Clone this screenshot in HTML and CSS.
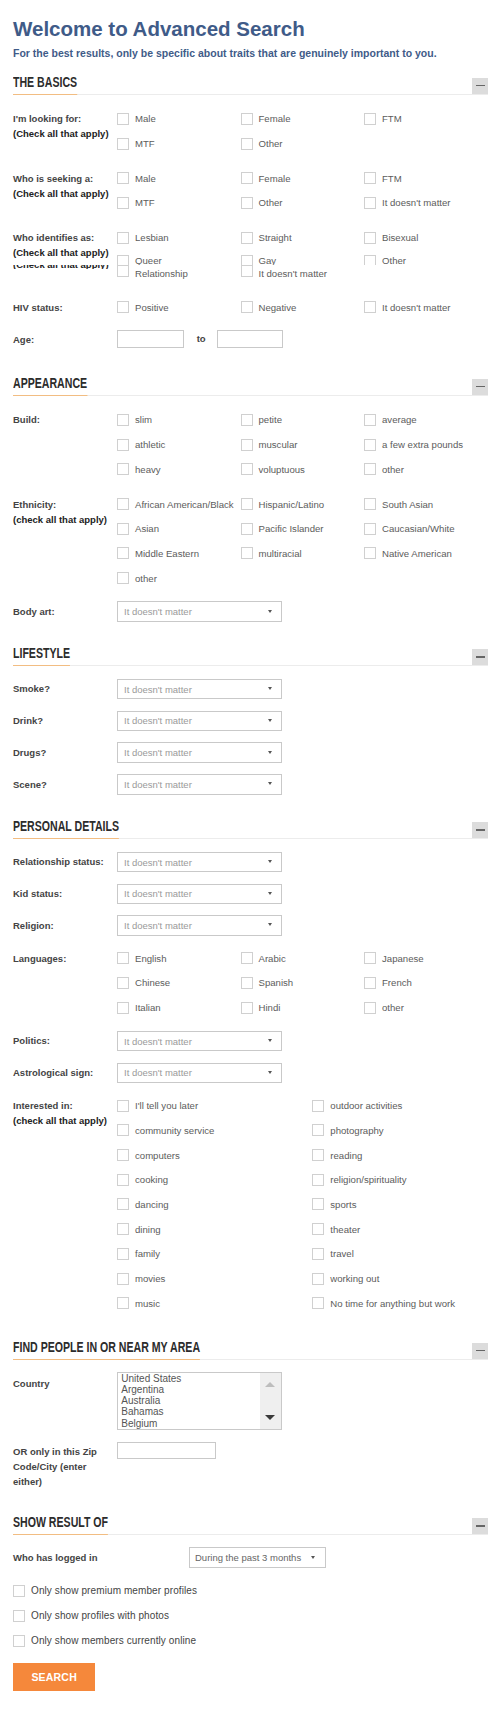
FILE: index.html
```html
<!DOCTYPE html>
<html lang="en">
<head>
<meta charset="utf-8">
<title>Advanced Search</title>
<link rel="stylesheet" href="styles.css">
</head>
<body>
<main class="page">
  <h1 class="title">Welcome to Advanced Search</h1>
  <p class="intro">For the best results, only be specific about traits that are genuinely important to you.</p>

  <section class="section first">
    <div class="section-head"><h2 class="section-title">THE BASICS</h2><button class="collapse" aria-label="Collapse"></button></div>
    <div class="section-body">
      <div class="field">
        <div class="field-label">I'm looking for:<span class="sub">(Check all that apply)</span></div>
        <div class="options cols-3">
          <label class="opt"><input type="checkbox"><span>Male</span></label>
          <label class="opt"><input type="checkbox"><span>Female</span></label>
          <label class="opt"><input type="checkbox"><span>FTM</span></label>
          <label class="opt"><input type="checkbox"><span>MTF</span></label>
          <label class="opt"><input type="checkbox"><span>Other</span></label>
        </div>
      </div>
      <div class="field">
        <div class="field-label">Who is seeking a:<span class="sub">(Check all that apply)</span></div>
        <div class="options cols-3">
          <label class="opt"><input type="checkbox"><span>Male</span></label>
          <label class="opt"><input type="checkbox"><span>Female</span></label>
          <label class="opt"><input type="checkbox"><span>FTM</span></label>
          <label class="opt"><input type="checkbox"><span>MTF</span></label>
          <label class="opt"><input type="checkbox"><span>Other</span></label>
          <label class="opt"><input type="checkbox"><span>It doesn't matter</span></label>
        </div>
      </div>
      <div class="field">
        <div class="field-label">Who identifies as:<span class="sub">(Check all that apply)</span><span class="sub-clip"><span class="sub">(Check all that apply)</span></span></div>
        <div class="options cols-3 identifies">
          <label class="opt"><input type="checkbox"><span>Lesbian</span></label>
          <label class="opt"><input type="checkbox"><span>Straight</span></label>
          <label class="opt"><input type="checkbox"><span>Bisexual</span></label>
          <label class="opt clipped"><input type="checkbox"><span>Queer</span></label>
          <label class="opt clipped"><input type="checkbox"><span>Gay</span></label>
          <label class="opt clipped"><input type="checkbox"><span>Other</span></label>
          <label class="opt raised"><input type="checkbox"><span>Relationship</span></label>
          <label class="opt raised"><input type="checkbox"><span>It doesn't matter</span></label>
        </div>
      </div>
      <div class="field">
        <div class="field-label">HIV status:</div>
        <div class="options cols-3">
          <label class="opt"><input type="checkbox"><span>Positive</span></label>
          <label class="opt"><input type="checkbox"><span>Negative</span></label>
          <label class="opt"><input type="checkbox"><span>It doesn't matter</span></label>
        </div>
      </div>
      <div class="field age-field">
        <div class="field-label">Age:</div>
        <div class="age-range">
          <input class="text-input age-input" type="text" aria-label="Minimum age">
          <span class="age-to">to</span>
          <input class="text-input age-input" type="text" aria-label="Maximum age">
        </div>
      </div>
    </div>
  </section>

  <section class="section">
    <div class="section-head"><h2 class="section-title">APPEARANCE</h2><button class="collapse" aria-label="Collapse"></button></div>
    <div class="section-body">
      <div class="field">
        <div class="field-label">Build:</div>
        <div class="options cols-3">
          <label class="opt"><input type="checkbox"><span>slim</span></label>
          <label class="opt"><input type="checkbox"><span>petite</span></label>
          <label class="opt"><input type="checkbox"><span>average</span></label>
          <label class="opt"><input type="checkbox"><span>athletic</span></label>
          <label class="opt"><input type="checkbox"><span>muscular</span></label>
          <label class="opt"><input type="checkbox"><span>a few extra pounds</span></label>
          <label class="opt"><input type="checkbox"><span>heavy</span></label>
          <label class="opt"><input type="checkbox"><span>voluptuous</span></label>
          <label class="opt"><input type="checkbox"><span>other</span></label>
        </div>
      </div>
      <div class="field">
        <div class="field-label">Ethnicity:<span class="sub">(check all that apply)</span></div>
        <div class="options cols-3">
          <label class="opt"><input type="checkbox"><span>African American/Black</span></label>
          <label class="opt"><input type="checkbox"><span>Hispanic/Latino</span></label>
          <label class="opt"><input type="checkbox"><span>South Asian</span></label>
          <label class="opt"><input type="checkbox"><span>Asian</span></label>
          <label class="opt"><input type="checkbox"><span>Pacific Islander</span></label>
          <label class="opt"><input type="checkbox"><span>Caucasian/White</span></label>
          <label class="opt"><input type="checkbox"><span>Middle Eastern</span></label>
          <label class="opt"><input type="checkbox"><span>multiracial</span></label>
          <label class="opt"><input type="checkbox"><span>Native American</span></label>
          <label class="opt"><input type="checkbox"><span>other</span></label>
        </div>
      </div>
      <div class="field select-field">
        <div class="field-label">Body art:</div>
        <div class="select"><select><option>It doesn't matter</option></select></div>
      </div>
    </div>
  </section>

  <section class="section">
    <div class="section-head"><h2 class="section-title">LIFESTYLE</h2><button class="collapse" aria-label="Collapse"></button></div>
    <div class="section-body">
      <div class="field select-field">
        <div class="field-label">Smoke?</div>
        <div class="select"><select><option>It doesn't matter</option></select></div>
      </div>
      <div class="field select-field">
        <div class="field-label">Drink?</div>
        <div class="select"><select><option>It doesn't matter</option></select></div>
      </div>
      <div class="field select-field">
        <div class="field-label">Drugs?</div>
        <div class="select"><select><option>It doesn't matter</option></select></div>
      </div>
      <div class="field select-field">
        <div class="field-label">Scene?</div>
        <div class="select"><select><option>It doesn't matter</option></select></div>
      </div>
    </div>
  </section>

  <section class="section">
    <div class="section-head"><h2 class="section-title">PERSONAL DETAILS</h2><button class="collapse" aria-label="Collapse"></button></div>
    <div class="section-body">
      <div class="field select-field">
        <div class="field-label">Relationship status:</div>
        <div class="select"><select><option>It doesn't matter</option></select></div>
      </div>
      <div class="field select-field">
        <div class="field-label">Kid status:</div>
        <div class="select"><select><option>It doesn't matter</option></select></div>
      </div>
      <div class="field select-field">
        <div class="field-label">Religion:</div>
        <div class="select"><select><option>It doesn't matter</option></select></div>
      </div>
      <div class="field">
        <div class="field-label">Languages:</div>
        <div class="options cols-3">
          <label class="opt"><input type="checkbox"><span>English</span></label>
          <label class="opt"><input type="checkbox"><span>Arabic</span></label>
          <label class="opt"><input type="checkbox"><span>Japanese</span></label>
          <label class="opt"><input type="checkbox"><span>Chinese</span></label>
          <label class="opt"><input type="checkbox"><span>Spanish</span></label>
          <label class="opt"><input type="checkbox"><span>French</span></label>
          <label class="opt"><input type="checkbox"><span>Italian</span></label>
          <label class="opt"><input type="checkbox"><span>Hindi</span></label>
          <label class="opt"><input type="checkbox"><span>other</span></label>
        </div>
      </div>
      <div class="field select-field">
        <div class="field-label">Politics:</div>
        <div class="select"><select><option>It doesn't matter</option></select></div>
      </div>
      <div class="field select-field">
        <div class="field-label">Astrological sign:</div>
        <div class="select"><select><option>It doesn't matter</option></select></div>
      </div>
      <div class="field">
        <div class="field-label">Interested in:<span class="sub">(check all that apply)</span></div>
        <div class="options cols-2">
          <label class="opt"><input type="checkbox"><span>I'll tell you later</span></label>
          <label class="opt"><input type="checkbox"><span>community service</span></label>
          <label class="opt"><input type="checkbox"><span>computers</span></label>
          <label class="opt"><input type="checkbox"><span>cooking</span></label>
          <label class="opt"><input type="checkbox"><span>dancing</span></label>
          <label class="opt"><input type="checkbox"><span>dining</span></label>
          <label class="opt"><input type="checkbox"><span>family</span></label>
          <label class="opt"><input type="checkbox"><span>movies</span></label>
          <label class="opt"><input type="checkbox"><span>music</span></label>
          <label class="opt"><input type="checkbox"><span>outdoor activities</span></label>
          <label class="opt"><input type="checkbox"><span>photography</span></label>
          <label class="opt"><input type="checkbox"><span>reading</span></label>
          <label class="opt"><input type="checkbox"><span>religion/spirituality</span></label>
          <label class="opt"><input type="checkbox"><span>sports</span></label>
          <label class="opt"><input type="checkbox"><span>theater</span></label>
          <label class="opt"><input type="checkbox"><span>travel</span></label>
          <label class="opt"><input type="checkbox"><span>working out</span></label>
          <label class="opt"><input type="checkbox"><span>No time for anything but work</span></label>
        </div>
      </div>
    </div>
  </section>

  <section class="section">
    <div class="section-head"><h2 class="section-title">FIND PEOPLE IN OR NEAR MY AREA</h2><button class="collapse" aria-label="Collapse"></button></div>
    <div class="section-body">
      <div class="field country-field">
        <div class="field-label">Country</div>
        <div class="listbox" role="listbox" aria-label="Country">
          <ul class="list-items">
            <li role="option">United States</li>
            <li role="option">Argentina</li>
            <li role="option">Australia</li>
            <li role="option">Bahamas</li>
            <li role="option">Belgium</li>
          </ul>
          <div class="scrollbar"><span class="arrow-up"></span><span class="arrow-down"></span></div>
        </div>
      </div>
      <div class="field zip-field">
        <div class="field-label">OR only in this Zip Code/City (enter either)</div>
        <div><input class="text-input zip-input" type="text" aria-label="Zip code or city"></div>
      </div>
    </div>
  </section>

  <section class="section">
    <div class="section-head"><h2 class="section-title">SHOW RESULT OF</h2><button class="collapse" aria-label="Collapse"></button></div>
    <div class="section-body">
      <div class="field select-field logged-field">
        <div class="field-label">Who has logged in</div>
        <div class="select select-logged"><select><option>During the past 3 months</option></select></div>
      </div>
      <div class="result-opts">
        <label class="opt"><input type="checkbox"><span>Only show premium member profiles</span></label>
        <label class="opt"><input type="checkbox"><span>Only show profiles with photos</span></label>
        <label class="opt"><input type="checkbox"><span>Only show members currently online</span></label>
      </div>
      <div><button class="search-btn" type="submit">SEARCH</button></div>
    </div>
  </section>
</main>
</body>
</html>
```
FILE: styles.css
```css
* { box-sizing: border-box; }

html, body {
  margin: 0;
  background: #fff;
}

body {
  font-family: "Liberation Sans", Arial, sans-serif;
  color: #333;
}

.page {
  width: 500px;
  padding: 0 12px 18px 13px;
}

.title {
  margin: 17px 0 0;
  font-size: 20.5px;
  line-height: 24px;
  font-weight: bold;
  color: #3f5b88;
}

.intro {
  margin: 5px 0 0;
  font-size: 10.5px;
  line-height: 14px;
  font-weight: bold;
  color: #3f5b88;
}

/* sections */
.section { margin-top: 23px; }
.section.first { margin-top: 13.5px; }

.section-head {
  display: flex;
  justify-content: space-between;
  align-items: flex-end;
  border-bottom: 1px solid #ececec;
}

.section-title {
  margin: 0 0 -1px;
  padding-bottom: 4px;
  border-bottom: 1px solid #f2bd82;
  font-size: 14.5px;
  line-height: 16px;
  font-weight: bold;
  color: #2c2c2c;
  white-space: nowrap;
  transform: scaleX(0.73);
  transform-origin: left bottom;
}

.collapse {
  width: 16px;
  height: 16px;
  padding: 0;
  border: 0;
  background: #dcdcdc;
  display: flex;
  align-items: center;
  justify-content: center;
  flex: none;
}

.collapse::before {
  content: "";
  width: 9px;
  height: 1.5px;
  background: #666;
}

.section-body {
  padding-top: 12px;
  display: flex;
  flex-direction: column;
  gap: 10px;
}

/* fields */
.field {
  display: grid;
  grid-template-columns: 104px 1fr;
}

.field-label {
  font-size: 9.5px;
  line-height: 15px;
  font-weight: bold;
  color: #444;
  padding-top: 4.85px;
  padding-right: 6px;
}

.field-label .sub {
  display: block;
  color: #222;
  white-space: nowrap;
}

.sub-clip {
  display: block;
  height: 4.5px;
  margin-top: 4.85px;
  overflow: hidden;
}

.sub-clip .sub { margin-top: -7.6px; }

.options {
  display: grid;
  grid-auto-rows: 24.7px;
}

.options.cols-3 { grid-template-columns: repeat(3, 123.5px); }

.options.cols-2 {
  grid-template-columns: repeat(2, 195.3px);
  grid-template-rows: repeat(9, 24.7px);
  grid-auto-flow: column;
}

.options.identifies { grid-template-rows: 24.7px 15px 20px; }

.opt {
  display: flex;
  align-items: center;
  gap: 6px;
  font-size: 9.6px;
  color: #5c5c5c;
  white-space: nowrap;
}

.opt input {
  appearance: none;
  -webkit-appearance: none;
  margin: 0;
  width: 12px;
  height: 12px;
  border: 1px solid #d0d0d0;
  background: #fff;
  border-radius: 0;
  flex: none;
}

.opt.clipped {
  align-items: flex-start;
  padding-top: 5px;
  overflow: hidden;
}

.opt.clipped span { line-height: 12px; }

.opt.raised { align-items: flex-start; }

.opt.raised span {
  line-height: 13px;
  padding-top: 2px;
}

/* age */
.age-field { height: 22px; }
.age-field .field-label { padding-top: 2.8px; }

.age-range {
  display: flex;
  align-items: center;
  align-self: start;
  margin-top: 0.5px;
}

.text-input {
  margin: 0;
  height: 17.4px;
  border: 1px solid #c9c9c9;
  background: #fff;
  border-radius: 0;
  padding: 0 4px;
  font: 9.5px "Liberation Sans", Arial, sans-serif;
}

.age-input { width: 66.7px; }

.age-to {
  margin: 0 11px 0 13px;
  font-size: 9.5px;
  font-weight: bold;
  color: #444;
}

/* selects */
.select-field {
  height: 21.7px;
  align-items: center;
}

.select-field .field-label { padding-top: 0; }

.select {
  position: relative;
  width: 164.7px;
  height: 20.4px;
}

.select select {
  appearance: none;
  -webkit-appearance: none;
  width: 100%;
  height: 100%;
  margin: 0;
  border: 1px solid #c9c9c9;
  border-radius: 0;
  background: #fff;
  padding: 0 0 0 6px;
  font: 9.5px "Liberation Sans", Arial, sans-serif;
  color: #9a9a9a;
}

.select::after {
  content: "";
  position: absolute;
  right: 9.5px;
  top: 8.5px;
  border-left: 2px solid transparent;
  border-right: 2px solid transparent;
  border-top: 3px solid #555;
  pointer-events: none;
}

.logged-field { grid-template-columns: 176px 1fr; }

.select-logged {
  width: 136.7px;
  height: 21px;
}

.select-logged select {
  padding-left: 5px;
  color: #666;
}

.select-logged::after { right: 11px; }

/* country list */
.country-field .field-label { padding-top: 4.3px; }

.listbox {
  display: flex;
  width: 164.7px;
  height: 58.4px;
  border: 1px solid #c9c9c9;
  background: #fff;
}

.list-items {
  flex: 1;
  list-style: none;
  margin: 0;
  padding: 0 0 0 3.3px;
  font-size: 10px;
  line-height: 11.3px;
  color: #555;
  overflow: hidden;
}

.scrollbar {
  width: 21px;
  background: #efefef;
  display: flex;
  flex-direction: column;
  justify-content: space-between;
  align-items: center;
  padding: 9.3px 0 9px;
}

.arrow-up {
  width: 0;
  height: 0;
  border-left: 5.5px solid transparent;
  border-right: 5.5px solid transparent;
  border-bottom: 5px solid #bdbdbd;
}

.arrow-down {
  width: 0;
  height: 0;
  border-left: 5.5px solid transparent;
  border-right: 5.5px solid transparent;
  border-top: 5px solid #3a3a3a;
}

/* zip */
.zip-field { align-items: start; }

.zip-field .field-label {
  padding-top: 3.9px;
  padding-bottom: 2px;
}

.zip-input { width: 98.7px; }

/* result options */
.result-opts {
  display: grid;
  grid-auto-rows: 24.8px;
}

.result-opts .opt {
  font-size: 10px;
  color: #444;
  letter-spacing: 0.1px;
}

.search-btn {
  width: 82.3px;
  height: 28.3px;
  border: 0;
  border-radius: 0;
  padding: 0;
  background: #f5883b;
  color: #fff;
  font: bold 10.5px "Liberation Sans", Arial, sans-serif;
  letter-spacing: 0.2px;
}
```
